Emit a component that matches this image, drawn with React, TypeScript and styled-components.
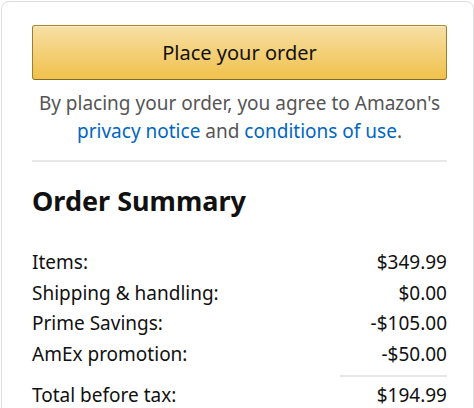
import React from 'react';
import styled, { createGlobalStyle } from 'styled-components';

const GlobalStyle = createGlobalStyle`
  html, body {
    margin: 0;
    padding: 0;
    background: #fff;
  }
  body {
    font-family: 'Noto Sans', 'Open Sans', Arial, sans-serif;
    color: #111;
  }
`;

const Panel = styled.div`
  box-sizing: border-box;
  margin: 1px 0 0 1px;
  width: 473px;
  height: 420px;
  border: 1px solid #ddd;
  border-radius: 8px;
  padding: 23px 26px 0 30px;
`;

const PlaceButton = styled.button`
  display: block;
  box-sizing: border-box;
  width: 100%;
  height: 55px;
  border: 1px solid;
  border-color: #a88734 #9c7e31 #846a29;
  border-radius: 3px;
  background: linear-gradient(to bottom, #f7dfa5, #f0c14b);
  box-shadow: 0 1px 0 rgba(255, 255, 255, 0.4) inset;
  font-family: inherit;
  font-size: 20px;
  color: #111;
  cursor: pointer;
`;

const Legal = styled.p`
  margin: 9px 0 0;
  text-align: center;
  font-size: 19px;
  line-height: 28px;
  color: #555;
`;

const LegalLink = styled.a`
  color: #0066c0;
  text-decoration: none;
`;

const Divider = styled.hr`
  margin: 15px 0 0;
  border: 0;
  height: 2px;
  background: #e7e7e7;
`;

const Heading = styled.h2`
  margin: 21px 0 0;
  font-size: 27px;
  font-weight: 700;
  line-height: 36px;
  color: #111;
`;

const Rows = styled.div`
  margin-top: 28px;
`;

const Row = styled.div`
  display: flex;
  justify-content: space-between;
  font-size: 19px;
  line-height: 30.5px;
  color: #111;
`;

const RuleRow = styled.div`
  display: flex;
  justify-content: flex-end;
  margin: 6px 0 3px;
`;

const Rule = styled.div`
  width: 107px;
  height: 2px;
  background: #e7e7e7;
`;

const lines = [
  ['Items:', '$349.99'],
  ['Shipping & handling:', '$0.00'],
  ['Prime Savings:', '-$105.00'],
  ['AmEx promotion:', '-$50.00'],
];

export default function App() {
  return (
    <>
      <GlobalStyle />
      <Panel>
        <PlaceButton>Place your order</PlaceButton>
        <Legal>
          By placing your order, you agree to Amazon's
          <br />
          <LegalLink href="#">privacy notice</LegalLink> and{' '}
          <LegalLink href="#">conditions of use</LegalLink>.
        </Legal>
        <Divider />
        <Heading>Order Summary</Heading>
        <Rows>
          {lines.map(([label, value]) => (
            <Row key={label}>
              <span>{label}</span>
              <span>{value}</span>
            </Row>
          ))}
          <RuleRow>
            <Rule />
          </RuleRow>
          <Row>
            <span>Total before tax:</span>
            <span>$194.99</span>
          </Row>
        </Rows>
      </Panel>
    </>
  );
}
